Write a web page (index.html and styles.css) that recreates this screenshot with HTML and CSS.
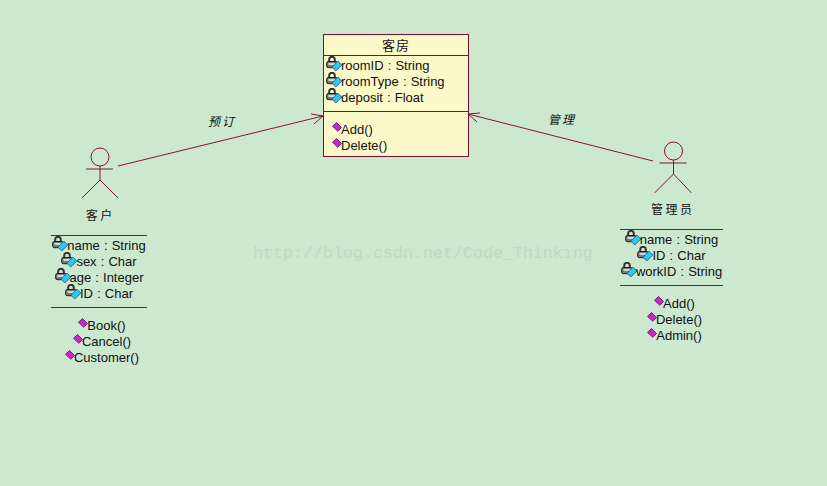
FILE: index.html
```html
<!DOCTYPE html>
<html lang="zh">
<head>
<meta charset="utf-8">
<title>UML</title>
<link rel="stylesheet" href="styles.css">
</head>
<body>
<svg class="defs" width="0" height="0" aria-hidden="true">
  <symbol id="attr" viewBox="0 0 16 16">
    <path d="M3.2 6V3.6a2.8 2.8 0 0 1 5.6 0V6" fill="none" stroke="#333" stroke-width="2"/>
    <rect x=".7" y="5.5" width="10.6" height="6.2" rx="1.6" fill="#777" stroke="#1c1c1c"/>
    <rect x="2.5" y="7.2" width="7" height="1.6" fill="#eee"/>
    <path d="M11.8 5 15.8 9 9.8 15 6 11.2z" fill="#2fc6f0" stroke="#0b5f86" stroke-width=".8"/>
  </symbol>
  <symbol id="meth" viewBox="0 0 10 10">
    <path d="M4.5.5 9.5 5.5 5.8 9.3.5 4.3z" fill="#cf22cf" stroke="#4f0f58" stroke-width=".8"/>
  </symbol>
</svg>
<main class="canvas">
  <svg class="edges" width="827" height="486" viewBox="0 0 827 486" aria-hidden="true">
    <path d="M118 166 323 116M311 114 323 116 314 124"/>
    <path d="M653 161 468 114M480 113 468 114 477 122"/>
  </svg>
  <div class="mark">http://blog.csdn.net/Code_Thinking</div>
  <div class="edge-label label-book">预订</div>
  <div class="edge-label label-admin">管理</div>

  <section class="class-box">
    <h2 class="class-title">客房</h2>
    <ul class="members attrs">
      <li><svg class="ico-a"><use href="#attr"/></svg>roomID : String</li>
      <li><svg class="ico-a"><use href="#attr"/></svg>roomType : String</li>
      <li><svg class="ico-a"><use href="#attr"/></svg>deposit : Float</li>
    </ul>
    <ul class="members meths">
      <li><svg class="ico-m"><use href="#meth"/></svg>Add()</li>
      <li><svg class="ico-m"><use href="#meth"/></svg>Delete()</li>
    </ul>
  </section>

  <section class="actor actor-customer">
    <svg class="figure" width="42" height="52" viewBox="0 0 42 52" aria-hidden="true">
      <circle cx="22" cy="10" r="9"/>
      <path d="M8 22H35M22 19V33M4 51 22 33 40 51"/>
    </svg>
    <h3 class="actor-name">客户</h3>
    <div class="actor-box">
      <ul class="members center attrs">
        <li><svg class="ico-a"><use href="#attr"/></svg>name : String</li>
        <li><svg class="ico-a"><use href="#attr"/></svg>sex : Char</li>
        <li><svg class="ico-a"><use href="#attr"/></svg>age : Integer</li>
        <li><svg class="ico-a"><use href="#attr"/></svg>ID : Char</li>
      </ul>
      <ul class="members center meths">
        <li><svg class="ico-m"><use href="#meth"/></svg>Book()</li>
        <li><svg class="ico-m"><use href="#meth"/></svg>Cancel()</li>
        <li><svg class="ico-m"><use href="#meth"/></svg>Customer()</li>
      </ul>
    </div>
  </section>

  <section class="actor actor-admin">
    <svg class="figure" width="42" height="52" viewBox="0 0 42 52" aria-hidden="true">
      <circle cx="22.5" cy="10" r="9"/>
      <path d="M8.5 22H35.5M22.5 19V33M3.5 52 22.5 33 40.5 52"/>
    </svg>
    <h3 class="actor-name">管理员</h3>
    <div class="actor-box">
      <ul class="members center attrs">
        <li><svg class="ico-a"><use href="#attr"/></svg>name : String</li>
        <li><svg class="ico-a"><use href="#attr"/></svg>ID : Char</li>
        <li><svg class="ico-a"><use href="#attr"/></svg>workID : String</li>
      </ul>
      <ul class="members center meths">
        <li><svg class="ico-m"><use href="#meth"/></svg>Add()</li>
        <li><svg class="ico-m"><use href="#meth"/></svg>Delete()</li>
        <li><svg class="ico-m"><use href="#meth"/></svg>Admin()</li>
      </ul>
    </div>
  </section>
</main>
</body>
</html>
```

FILE: styles.css
```css
html, body {
  margin: 0;
  padding: 0;
  background: #cce8cf;
}
.defs {
  position: absolute;
}
.canvas {
  position: relative;
  width: 827px;
  height: 486px;
  overflow: hidden;
  background: #cce8cf;
  color: #111;
  font-family: "Liberation Sans", "Noto Sans CJK SC", sans-serif;
  font-size: 13px;
}
.edges {
  position: absolute;
  left: 0;
  top: 0;
}
.edges path {
  fill: none;
  stroke: #8a1238;
  stroke-width: 1;
}
.mark {
  position: absolute;
  left: 253px;
  top: 244px;
  font-family: "Liberation Mono", monospace;
  font-size: 16.67px;
  line-height: 20px;
  color: #bddac3;
}
.edge-label {
  position: absolute;
  font-size: 12px;
  line-height: 16px;
  font-style: italic;
  letter-spacing: 2px;
  font-family: "Noto Sans CJK SC", sans-serif;
}
.label-book { left: 208px; top: 113px; }
.label-admin { left: 548px; top: 111px; }

.class-box {
  position: absolute;
  left: 323px;
  top: 34px;
  width: 144px;
  height: 121px;
  border: 1px solid #7a1030;
  background: #fbf9c9;
}
.class-title {
  margin: 0;
  height: 20px;
  border-bottom: 1px solid #7a1030;
  font-size: 13px;
  font-weight: normal;
  line-height: 20px;
  text-align: center;
  letter-spacing: 1px;
  font-family: "Noto Sans CJK SC", sans-serif;
}
.members {
  margin: 0;
  padding: 0;
  list-style: none;
}
.members li {
  display: flex;
  align-items: center;
  height: 16px;
  line-height: 16px;
  white-space: nowrap;
  word-spacing: 0.5px;
}
.ico-a {
  flex: none;
  width: 16px;
  height: 16px;
  margin: -5px -1px 0 0;
}
.ico-m {
  flex: none;
  width: 10px;
  height: 10px;
  margin: -6px -1px 0 0;
}
.class-box .attrs {
  padding: 2px 0 0 2px;
  height: 53px;
  border-bottom: 1px solid #7a1030;
}
.class-box .meths {
  padding: 10px 0 0 8px;
}
.actor {
  position: absolute;
  display: flex;
  flex-direction: column;
  align-items: center;
}
.actor-customer {
  left: 51px;
  top: 147px;
  width: 96px;
}
.actor-admin {
  left: 620px;
  top: 141px;
  width: 103px;
}
.figure {
  display: block;
}
.figure circle, .figure path {
  fill: none;
  stroke: #8a1238;
  stroke-width: 1;
}
.actor-name {
  margin: 8px 0 0;
  padding-left: 2.5px;
  height: 28px;
  font-size: 12px;
  font-weight: normal;
  line-height: 16px;
  letter-spacing: 2.5px;
  font-family: "Noto Sans CJK SC", sans-serif;
}
.actor-box {
  width: 100%;
  border-top: 1px solid #8a1238;
}
.center li {
  justify-content: center;
}
.actor-box .attrs {
  padding: 2px 0 5px;
  border-bottom: 1px solid #8a1238;
}
.actor-box .meths {
  padding: 10px 0 0 6px;
}
```
